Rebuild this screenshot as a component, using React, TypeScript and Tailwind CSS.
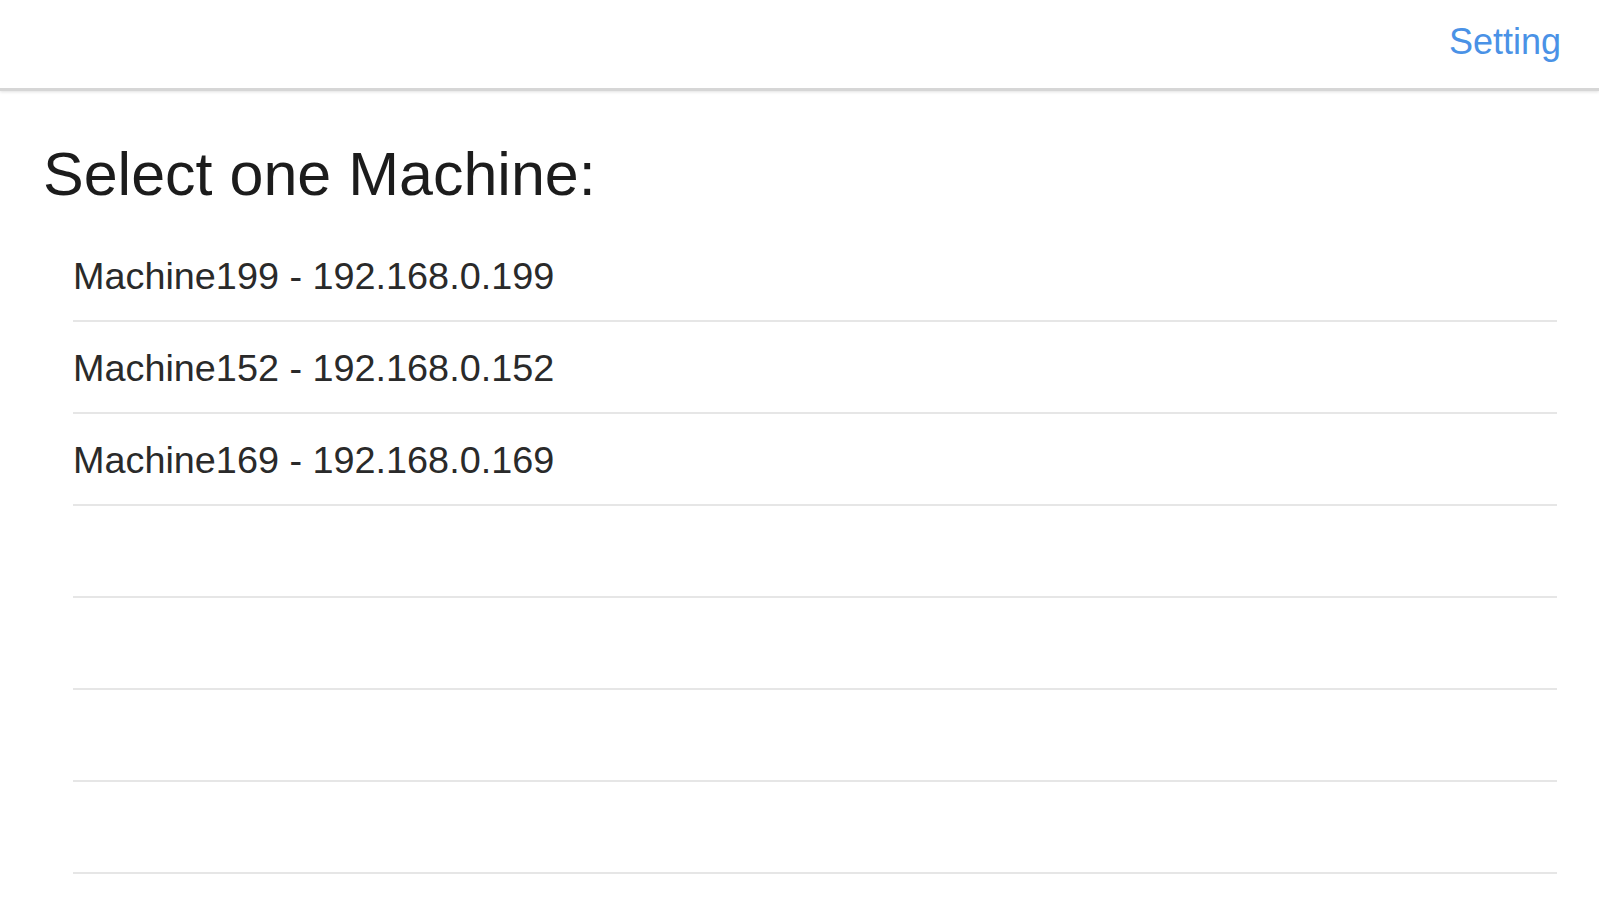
import React from 'react';

const machines = [
  'Machine199 - 192.168.0.199',
  'Machine152 - 192.168.0.152',
  'Machine169 - 192.168.0.169',
  '',
  '',
  '',
  '',
];

export default function App() {
  return (
    <div className="w-[1599px] h-[900px] overflow-hidden bg-white font-['Liberation_Sans',Arial,sans-serif]">
      <header className="h-[91px] flex items-start justify-end pr-[38px] pt-[24px] bg-white border-b-[3px] border-[#d6d6d6] shadow-[0_1px_3px_rgba(0,0,0,0.12)]">
        <button className="text-[36px] leading-none text-[#4a92e6]">Setting</button>
      </header>
      <h1 className="mt-[53px] pl-[43px] text-[61px] leading-none text-[#1c1c1c]">Select one Machine:</h1>
      <ul className="mt-[25px] ml-[73px] mr-[42px]">
        {machines.map((m, i) => (
          <li
            key={i}
            className="h-[92px] flex items-center pt-[4px] border-b-2 border-[#e6e6e6] text-[37.8px] leading-none text-[#2a2a2a]"
          >
            {m}
          </li>
        ))}
      </ul>
    </div>
  );
}
